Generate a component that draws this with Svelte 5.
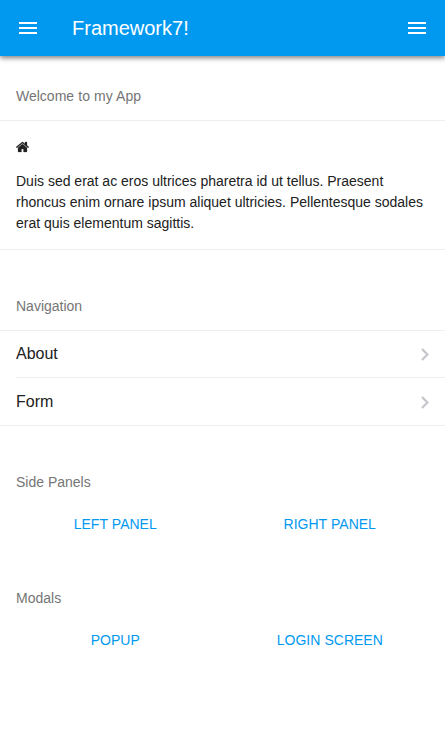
<script>
  const pages = ['About', 'Form'];
  const groups = [
    { title: 'Side Panels', buttons: ['Left Panel', 'Right Panel'] },
    { title: 'Modals', buttons: ['Popup', 'Login Screen'] }
  ];
</script>

{#snippet bars()}
  <svg width="18" height="12" viewBox="0 0 18 12" fill="#fff" shape-rendering="crispEdges" aria-hidden="true">
    <path d="M0 0h18v2H0zM0 5h18v2H0zM0 10h18v2H0z" />
  </svg>
{/snippet}

<div class="page">
  <header>
    <a href="#left" aria-label="Left menu">{@render bars()}</a>
    <div class="brand">Framework7!</div>
    <a href="#right" aria-label="Right menu">{@render bars()}</a>
  </header>

  <main>
    <h2 class="first">Welcome to my App</h2>
    <section class="intro">
      <p>
        <svg class="home" width="13" height="14" viewBox="0 -1536 1664 1792" aria-hidden="true">
          <g transform="scale(1 -1)" fill="#212121" stroke="#212121" stroke-width="30">
            <path d="M1408 544v-480q0 -26 -19 -45t-45 -19h-384v384h-256v-384h-384q-26 0 -45 19t-19 45v480q0 1 .5 3t.5 3l575 474l575 -474q1 -2 1 -6zM1631 613l-62 -74q-8 -9 -21 -11h-3q-13 0 -21 7l-692 577l-692 -577q-12 -8 -24 -7q-13 2 -21 11l-62 74q-8 10 -7 23.500t11 21.500l719 599q32 26 76 26t76 -26l244 -204v195q0 14 9 23t23 9h192q14 0 23 -9t9 -23v-408l219 -182q10 -8 11 -21.500t-7 -23.500z" />
          </g>
        </svg>
      </p>
      <p>Duis sed erat ac eros ultrices pharetra id ut tellus. Praesent rhoncus enim ornare ipsum aliquet ultricies. Pellentesque sodales erat quis elementum sagittis.</p>
    </section>

    <h2>Navigation</h2>
    <ul>
      {#each pages as name}
        <li>
          <a href="#{name}">
            <span>{name}</span>
            <svg width="8" height="13" viewBox="0 0 8 13" aria-hidden="true">
              <path d="M1 1l5.400 5.500L1 12" fill="none" stroke="#c7c7cc" stroke-width="2.400" />
            </svg>
          </a>
        </li>
      {/each}
    </ul>

    {#each groups as group}
      <h2>{group.title}</h2>
      <div class="row">
        {#each group.buttons as label}
          <button>{label}</button>
        {/each}
      </div>
    {/each}
  </main>
</div>

<style>
  :global(body) { margin: 0; background: #fff; }
  .page {
    min-height: 739px;
    box-sizing: border-box;
    font: 14px/21px "Liberation Sans", Arial, sans-serif;
    color: #212121;
  }
  header {
    display: flex;
    align-items: center;
    height: 56px;
    background: #0199f0;
    box-shadow: 0 2px 5px rgba(0, 0, 0, .5);
  }
  header a {
    display: flex;
    align-items: center;
    justify-content: center;
    width: 56px;
    height: 56px;
  }
  .brand {
    flex: 1;
    padding-left: 16px;
    color: #fff;
    font-size: 20px;
    line-height: 56px;
  }
  h2 {
    margin: 32px 0 0;
    padding: 0 16px;
    font-size: 14px;
    font-weight: 400;
    line-height: 48px;
    color: #757575;
  }
  .first { margin-top: 16px; word-spacing: .26px; }
  .intro {
    padding: 16px;
    box-shadow: inset 0 1px #eee, inset 0 -1px #eee;
  }
  p { margin: 0; }
  p + p { margin-top: 14px; }
  p:first-child { display: flex; align-items: center; height: 21px; }
  .home { display: block; }
  ul {
    margin: 0;
    padding: 0 0 0 16px;
    list-style: none;
    box-shadow: inset 0 1px #eee, inset 0 -1px #eee;
  }
  li + li { box-shadow: 0 -1px #eee; }
  li a {
    display: flex;
    align-items: center;
    justify-content: space-between;
    height: 48px;
    padding-right: 16px;
    font-size: 16px;
    color: #212121;
    text-decoration: none;
  }
  li span { padding-bottom: 2px; }
  .row { display: flex; gap: 16px; padding: 0 16px; }
  button {
    flex: 1 1 0;
    height: 36px;
    padding: 0;
    border: 0;
    background: none;
    font: 14px/36px "Liberation Sans", Arial, sans-serif;
    text-transform: uppercase;
    word-spacing: .26px;
    color: #0199f0;
  }
</style>
